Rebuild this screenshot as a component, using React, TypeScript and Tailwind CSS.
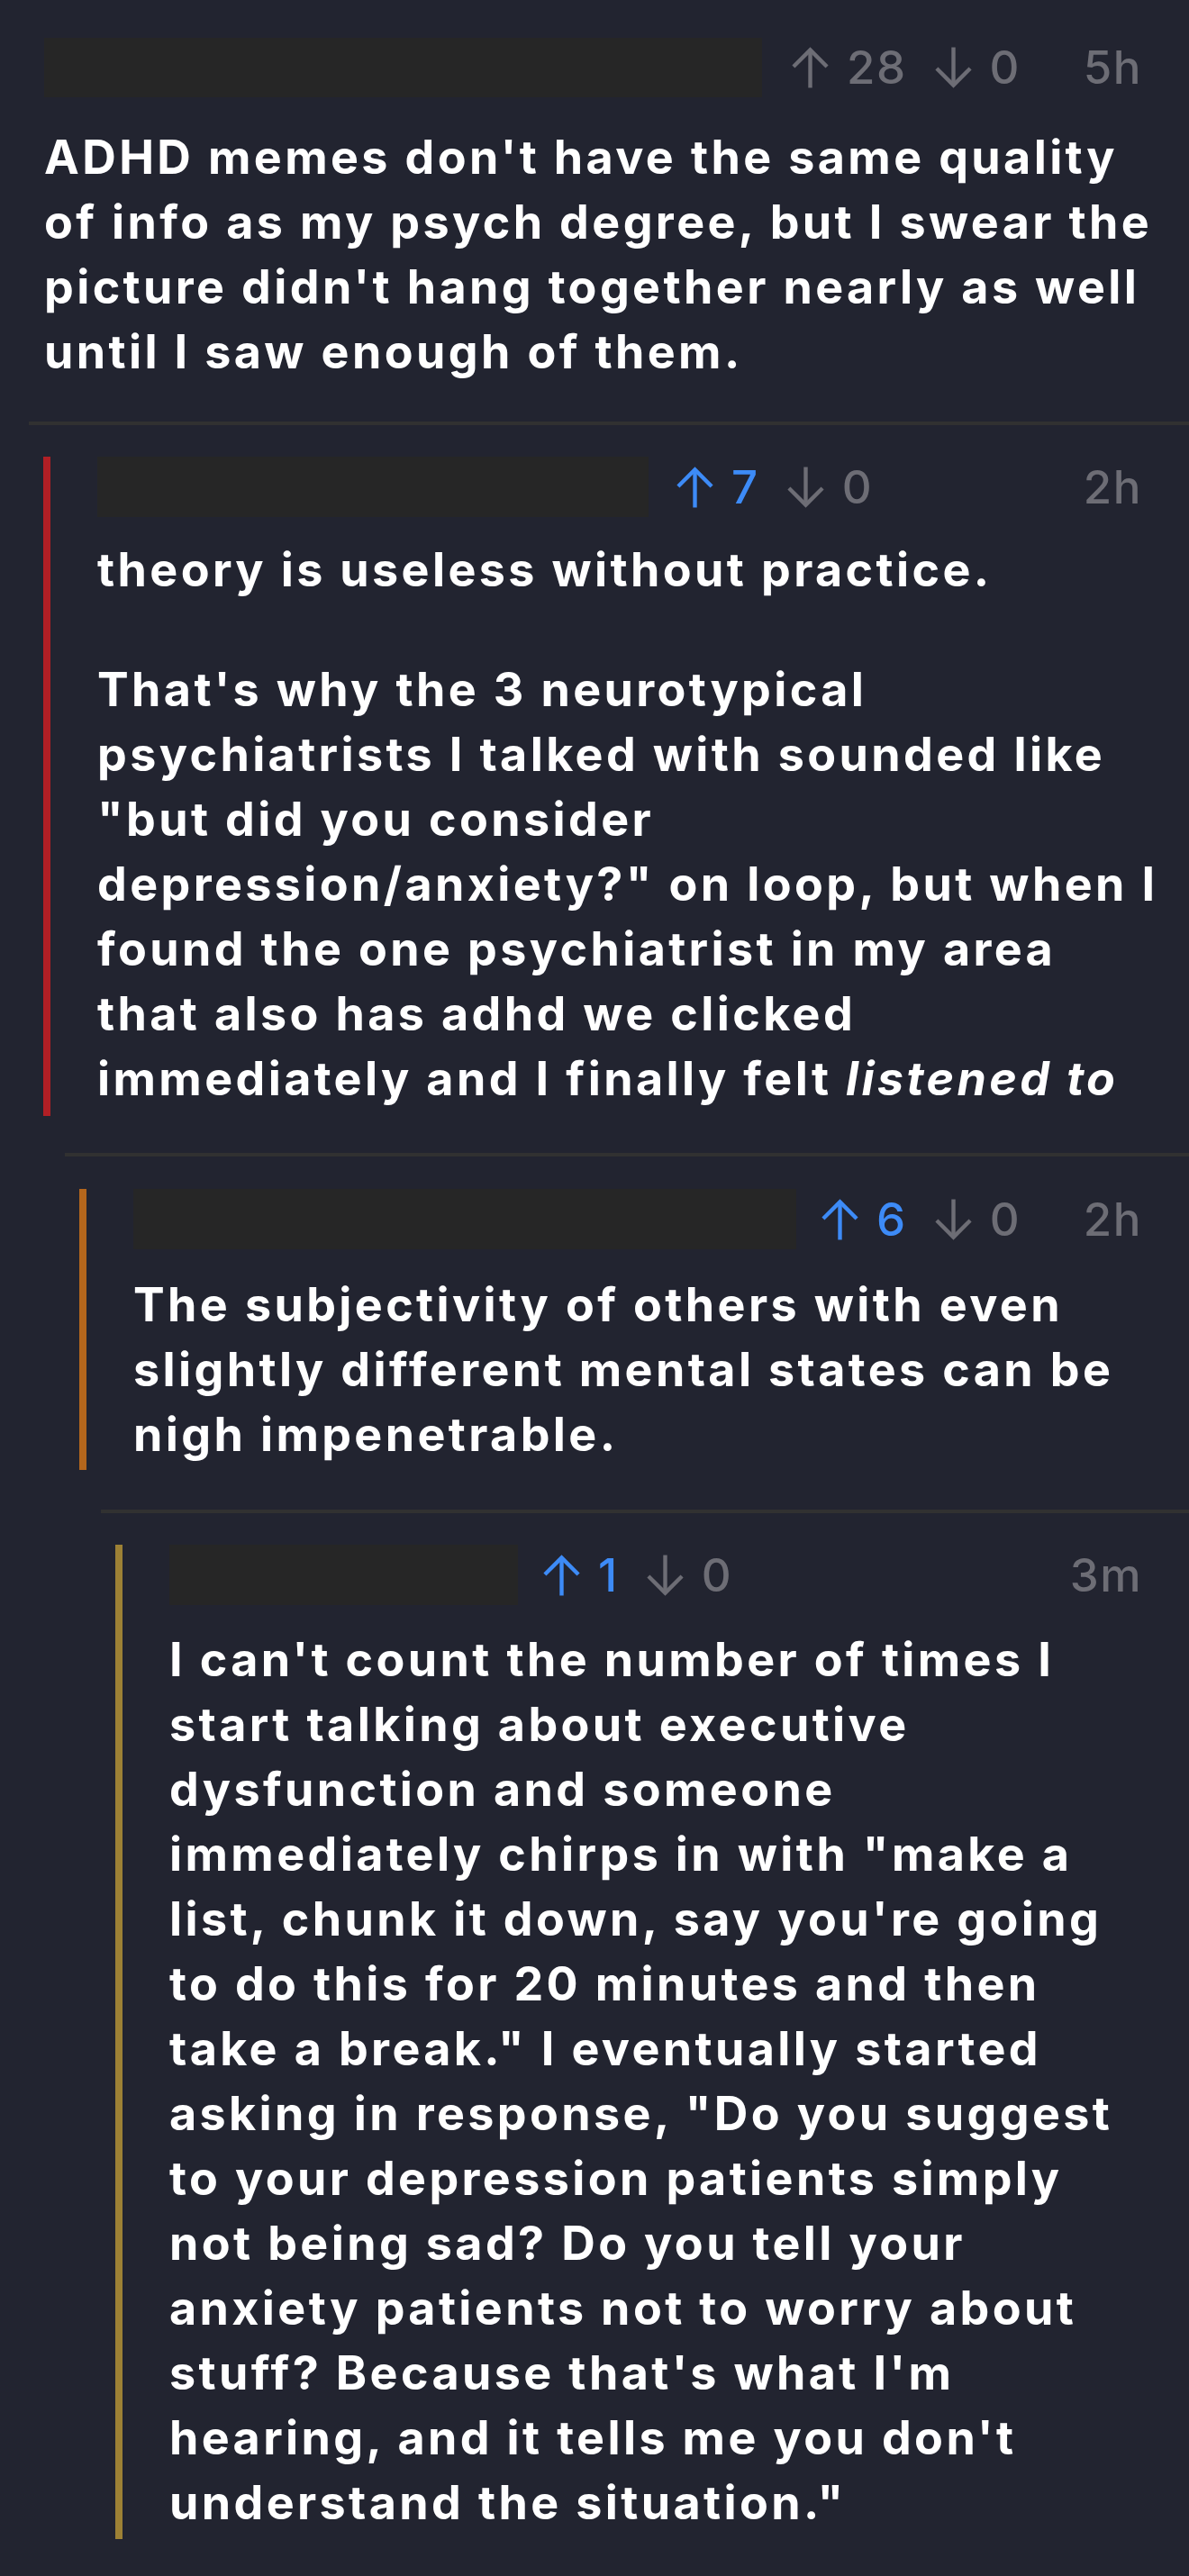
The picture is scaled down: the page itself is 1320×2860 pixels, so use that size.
import React from "react";

const font = { fontFamily: "Inter, 'Noto Sans', sans-serif" };

function ArrowUp({ className }: { className: string }) {
  return (
    <svg viewBox="0 0 44 46" className={className} fill="none" stroke="currentColor" strokeWidth={4.5} strokeLinecap="butt" strokeLinejoin="miter">
      <path d="M22 3 V46" />
      <path d="M3 22 L22 3 L41 22" />
    </svg>
  );
}

function ArrowDown({ className }: { className: string }) {
  return (
    <svg viewBox="0 0 44 46" className={className} fill="none" stroke="currentColor" strokeWidth={4.5} strokeLinecap="butt" strokeLinejoin="miter">
      <path d="M22 0 V43" />
      <path d="M3 24 L22 43 L41 24" />
    </svg>
  );
}

function Meta({ up, upActive, time }: { up: number; upActive: boolean; time: string }) {
  const upColor = upActive ? "text-[#3d8bf7]" : "text-[#6d6d75]";
  return (
    <>
      <div className="flex items-center">
        <ArrowUp className={`w-[43px] h-[46px] ${upColor}`} />
        <span className={`ml-[19px] ${upColor}`}>{up}</span>
        <ArrowDown className="ml-[30px] w-[43px] h-[46px] text-[#6d6d75]" />
        <span className="ml-[19px] text-[#6d6d75]">0</span>
      </div>
      <div className="ml-auto text-[#6d6d75]">{time}</div>
    </>
  );
}

const bodyCls = "text-[52px] leading-[72px] font-bold tracking-[0.065em] whitespace-nowrap";
const metaCls = "flex items-center h-[67px] text-[51px] leading-none font-medium tracking-[0.03em]";

function Lines({ lines }: { lines: React.ReactNode[] }) {
  return (
    <p>
      {lines.map((l, i) => (
        <span key={i} className="block">
          {l}
        </span>
      ))}
    </p>
  );
}

export default function App() {
  return (
    <div className="min-h-screen w-[1320px] overflow-hidden bg-[#222430] text-white antialiased" style={font}>
      {/* Comment 0 */}
      <div className="pt-[41px] pb-[41px] pl-[49px] pr-[52px]">
        <div className={metaCls}>
          <div className="w-[797px] h-[66px] bg-[#262626]" />
          <div className="ml-[32px] flex flex-1 items-center">
            <Meta up={28} upActive={false} time="5h" />
          </div>
        </div>
        <div className={`mt-[31px] ${bodyCls}`}>
          <Lines
            lines={[
              "ADHD memes don't have the same quality",
              "of info as my psych degree, but I swear the",
              "picture didn't hang together nearly as well",
              "until I saw enough of them.",
            ]}
          />
        </div>
      </div>

      <div className="ml-[32px] h-[4px] bg-[#313131]" />

      {/* Comment 1 */}
      <div className="ml-[48px] pt-[35px] pb-[41px] pr-[52px]">
        <div className="border-l-[8px] border-[#b11f25] pl-[52px] pb-[5px]">
          <div className={metaCls}>
            <div className="w-[612px] h-[67px] bg-[#262626]" />
            <div className="ml-[30px] flex flex-1 items-center">
              <Meta up={7} upActive={true} time="2h" />
            </div>
          </div>
          <div className={`mt-[23px] ${bodyCls}`}>
            <p>theory is useless without practice.</p>
            <div className="mt-[61px]">
              <Lines
                lines={[
                  "That's why the 3 neurotypical",
                  "psychiatrists I talked with sounded like",
                  "\"but did you consider",
                  "depression/anxiety?\" on loop, but when I",
                  "found the one psychiatrist in my area",
                  "that also has adhd we clicked",
                  <>
                    immediately and I finally felt <em>listened to</em>
                  </>,
                ]}
              />
            </div>
          </div>
        </div>
      </div>

      <div className="ml-[72px] h-[4px] bg-[#313131]" />

      {/* Comment 2 */}
      <div className="ml-[88px] pt-[36px] pb-[44px] pr-[52px]">
        <div className="border-l-[8px] border-[#b4661c] pl-[52px] pb-[3px]">
          <div className={metaCls}>
            <div className="w-[736px] h-[67px] bg-[#262626]" />
            <div className="ml-[27px] flex flex-1 items-center">
              <Meta up={6} upActive={true} time="2h" />
            </div>
          </div>
          <div className={`mt-[26px] ${bodyCls}`}>
            <Lines
              lines={[
                "The subjectivity of others with even",
                "slightly different mental states can be",
                "nigh impenetrable.",
              ]}
            />
          </div>
        </div>
      </div>

      <div className="ml-[112px] h-[4px] bg-[#313131]" />

      {/* Comment 3 */}
      <div className="ml-[128px] pt-[35px] pb-[41px] pr-[52px]">
        <div className="border-l-[8px] border-[#9d8135] pl-[52px] pb-[4px]">
          <div className={metaCls}>
            <div className="w-[387px] h-[67px] bg-[#262626]" />
            <div className="ml-[27px] flex flex-1 items-center">
              <Meta up={1} upActive={true} time="3m" />
            </div>
          </div>
          <div className={`mt-[25px] ${bodyCls}`}>
            <Lines
              lines={[
                "I can't count the number of times I",
                "start talking about executive",
                "dysfunction and someone",
                "immediately chirps in with \"make a",
                "list, chunk it down, say you're going",
                "to do this for 20 minutes and then",
                "take a break.\" I eventually started",
                "asking in response, \"Do you suggest",
                "to your depression patients simply",
                "not being sad? Do you tell your",
                "anxiety patients not to worry about",
                "stuff? Because that's what I'm",
                "hearing, and it tells me you don't",
                "understand the situation.\"",
              ]}
            />
          </div>
        </div>
      </div>
    </div>
  );
}
